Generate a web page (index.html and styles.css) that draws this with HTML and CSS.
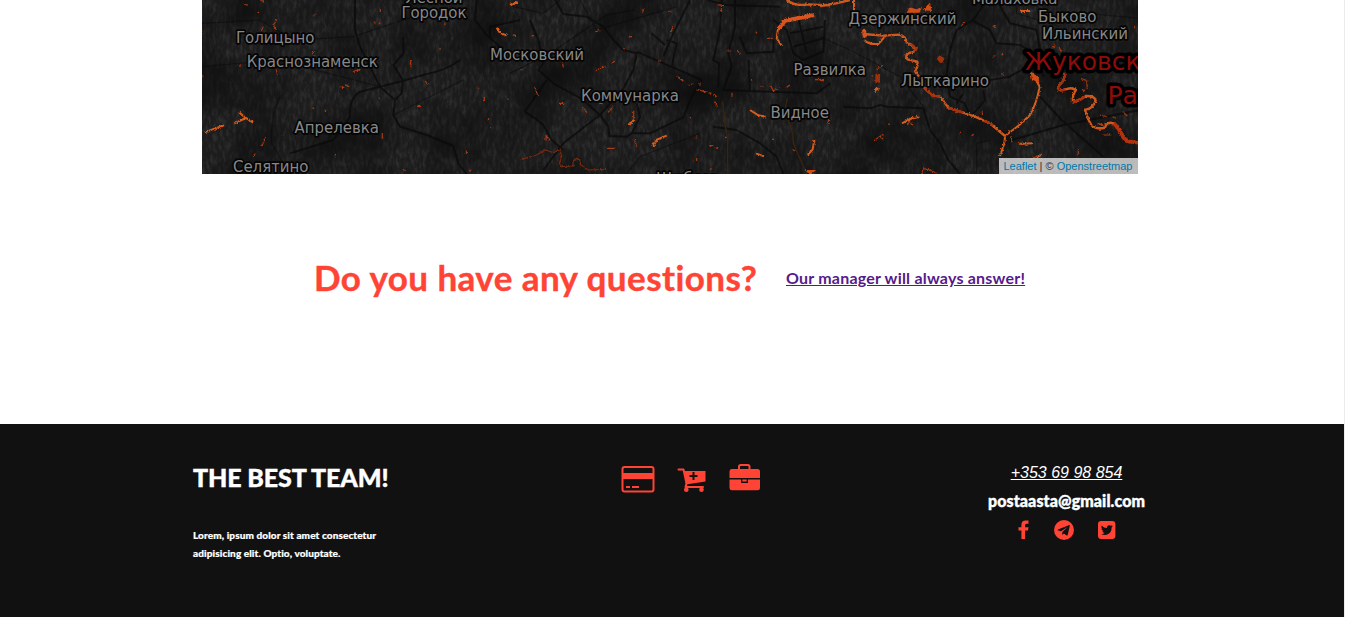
FILE: index.html
```html
<!DOCTYPE html>
<html lang="en">
<head>
<meta charset="utf-8">
<title>The best team</title>
<link rel="stylesheet" href="styles.css">
</head>
<body>
<div class="page">
<section class="map">
<svg class="map-canvas" width="936" height="174" viewBox="202 0 936 174" aria-hidden="true">
  <defs>
    <filter id="grain" x="0" y="0" width="100%" height="100%" color-interpolation-filters="sRGB">
      <feTurbulence type="fractalNoise" baseFrequency="0.3 0.12" numOctaves="3" seed="8"/>
      <feColorMatrix values="0 0 0 0 .3  0 0 0 0 .3  0 0 0 0 .3  1.7 0 0 0 -.68"/>
    </filter>
    <filter id="patch" x="0" y="0" width="100%" height="100%" color-interpolation-filters="sRGB">
      <feTurbulence type="fractalNoise" baseFrequency="0.018" numOctaves="3" seed="3"/>
      <feColorMatrix values="0 0 0 0 .06  0 0 0 0 .06  0 0 0 0 .06  2.2 0 0 0 -.85"/>
    </filter>
    <filter id="rough" x="-5%" y="-5%" width="110%" height="110%">
      <feTurbulence type="fractalNoise" baseFrequency="0.2" numOctaves="2" seed="5"/>
      <feDisplacementMap in="SourceGraphic" scale="9" xChannelSelector="R" yChannelSelector="G"/>
    </filter>
  </defs>
  <rect x="202" width="936" height="174" fill="#1c1c1c"/>
  <rect x="202" width="936" height="174" filter="url(#grain)" opacity=".55"/>
  <rect x="202" width="936" height="174" filter="url(#patch)"/>

  <g transform="translate(200 0) scale(.33333)">
    <g class="road">
      <path d="M465 0V90L480 140L510 200L540 260L585 300L580 345L600 380L680 405L760 438L775 490L800 522"/>
      <path d="M780 180Q740 210 680 222L600 245L540 260L480 275Q445 300 450 350L400 420L270 460"/>
      <path d="M610 110V160L580 195L608 240L605 280L585 300"/>
      <path d="M830 0L825 60L860 105L900 140M870 110V80L960 60"/>
      <path class="thin" d="M6 70L180 60L280 120L460 110L640 50M6 200L230 180L540 260M240 290Q210 350 215 430L270 522M580 345L790 240"/>
    </g>
    <g class="water">
      <path class="thick" d="M14 397L45 385L72 376M103 370L138 354L160 368M137 354L117 337"/>
      <path d="M130 13L144 16M185 0L192 8M338 49L348 40M230 58L221 78L229 90M184 92L190 80M541 24V36M520 66L526 69M536 73L541 67M734 76L736 68M228 208L233 224M120 192V201M336 162L344 154M338 168H346M458 215L481 208M418 262H430M436 254L448 260M676 243L683 254M853 291V305M832 265H836M865 354V362M872 382V386M799 450V462M632 180V200M720 143V149M757 113V118M651 319H663M547 400V414M544 414H550M376 328V335M336 322L342 326M197 412L191 425L186 438M160 468L166 461M404 467H408M609 508L614 512M808 516L813 509M250 405V408M172 35L177 38M6 95L8 100M5 228H10M924 295V300M538 292V296"/>
      <path class="thick" d="M890 83L900 99L920 106M932 15L951 8"/>
    </g>
  </g>

  <g transform="translate(510 0) scale(.33333)">
    <g class="road">
      <path d="M135 0L160 42L230 50L280 80L310 120L340 150L380 160L370 210L340 265L270 345L160 430L100 510"/>
      <path d="M540 0L490 100L460 170M270 345L295 380L298 408L350 410L365 400L420 400L520 352L545 290L575 240L380 155"/>
      <path d="M635 0L630 90L610 180L627 190L625 260M675 0V80L655 160L665 200L640 270L920 280L960 250"/>
      <path d="M690 110L710 160L790 155L790 120M715 180L720 270M590 0L650 15L810 20M610 380L680 390L750 430L800 470L820 522"/>
      <path d="M60 60L85 120L100 190L85 210L130 250L220 300L270 345M110 240L45 335L75 355L100 375L125 420L160 450M380 310L390 350L365 400M470 120L500 130L485 200M425 100L465 135M790 60L830 90L850 160L880 180L940 155L945 60M840 100L940 80M865 55L890 160M850 140L940 115"/>
      <path class="thin" d="M0 220L120 160L290 45L370 30M10 20L100 40L150 0M210 0L260 90L500 20M350 522L390 470L570 400M880 360L960 340"/>
    </g>
    <g class="amber">
      <path d="M638 305L645 370L653 420V522M832 295L822 340Q850 380 850 430L890 522"/>
    </g>
    <g class="water">
      <path class="wide" d="M830 0Q855 20 895 13L960 16"/>
      <path class="bank" d="M912 45L870 53L825 62L805 88"/>
      <path class="thick" d="M804 85L800 115L815 137M720 330L745 346L767 350M738 460L762 469M913 420L908 448L893 465M0 15L23 6M371 360L357 376M432 441L428 428M430 438L441 419L470 407"/>
      <path d="M400 26L398 38M478 33L484 36M256 95L268 92M354 110H368M67 104V110M10 104L18 107M158 190L160 202M258 212L272 203L287 201M305 189L315 184M30 210H40M74 260L84 288M147 310H163M217 321L231 338M268 311H278M293 338L310 320M371 330V360M373 420L380 440M288 445H314M108 422V408L120 420M340 146H344M444 183H449M483 95L489 82M500 228L522 245M536 256L550 250M560 268L604 280M611 282L620 290M615 305L622 320M650 153H662M680 150L690 160M736 93L741 100M771 115H788M634 18V36M625 14L642 17M666 278V290M720 235L728 243M755 258L760 262M783 258L790 273L806 266M830 262L840 255M915 239H942M540 350L543 356M570 250V257M598 437H610M558 410L562 416M616 444L624 445M786 418H792M560 475V483M600 510L606 503M848 448L854 453M645 412H650"/>
      <path class="fill" d="M884 510H918L905 522H898Z"/>
      <path class="dim" d="M35 478L80 465L105 450L130 458L150 450L155 468L148 490L155 500L190 498Q185 480 200 475Q215 480 210 493L235 510L288 508"/>
    </g>
  </g>

  <g transform="translate(820 0) scale(.33333)">
    <g class="road">
      <path d="M500 0L460 60L410 90L390 150L380 220L390 290L435 310L450 350L480 320L495 300L490 270M430 280L410 310M455 60L510 90L530 130L600 135L650 165L670 230M510 240L570 230L620 200"/>
      <path d="M70 320L150 325L180 315L200 320L310 325L330 390L360 430L385 480L420 522M570 422L730 375L960 330M660 290L725 360L850 470M530 0L570 70L650 90L660 150"/>
      <path class="thin" d="M0 110L90 150L240 230L310 320M510 420L470 430V522M730 70L800 40L960 55M170 0L210 60M590 0V40L720 80"/>
    </g>
    <g class="water">
      <path class="bank" d="M132 87L134 112"/>
      <path class="wide" d="M0 18L48 10L90 0M130 102L190 107L238 104Q258 110 260 127L288 145Q285 157 270 158Q252 165 262 178L292 185Q295 200 285 214L297 230M312 262L335 285L360 290L385 323L465 350L510 370L555 408"/>
      <path class="deep" d="M270 130L290 145L284 155M314 264L335 285L360 290M385 323L430 338M490 360L520 376"/>
      <path class="thick" d="M133 120Q145 134 175 132L196 108M102 0V30M555 408L598 375L630 345Q650 310 659 260L648 240L636 220M555 410L553 430L540 468"/>
      <path class="fill" d="M260 38L268 22L290 28L306 20L300 38ZM308 30L330 8L335 33ZM632 214L656 233L658 248L635 238Z"/>
      <path class="fill dark" d="M350 180L357 166L374 175L366 190ZM166 222H180V248H166Z"/>
      <path class="wide" d="M732 218Q738 240 718 255Q705 277 735 269Q755 260 768 270Q756 285 759 307Q782 300 796 288Q825 287 827 302Q820 325 795 330Q802 357 815 377Q832 390 855 383Q860 363 882 370"/>
      <path class="deep" d="M732 218Q738 240 718 255Q705 277 735 269M759 307Q782 300 796 288"/>
      <path class="bank red" d="M882 370Q904 395 910 413L925 424L960 429"/>
      <path class="thick" d="M246 370L270 357L298 350M597 432L637 430M165 275L170 265L177 270M602 33H631M650 472L665 463"/>
      <path d="M170 208L190 195M154 228H160M424 78L434 66M0 242H12M26 360L23 372M164 420L190 403M180 410L190 418M262 375L270 363L275 376M204 372L210 373M519 77L527 83M520 168H527M544 165L550 163M543 222H552M487 334V345M573 408L576 427M599 434V426M694 146L706 136M718 142L723 155M713 190L718 205M782 236L800 241L802 268M796 271H788M843 372L851 380M833 370L855 375M840 345L860 350M850 405H872L868 401M878 350L888 355M908 335L922 348M775 450V463M305 522L310 506L330 510L350 520M418 400L424 396M944 80V85M455 408L461 402M630 478L650 470"/>
    </g>
  </g>

  <g class="towns">
    <text x="405.500" y="3" textLength="57">Лесной</text>
    <text x="401.500" y="18" textLength="65">Городок</text>
    <text x="236" y="43.300" textLength="78.500">Голицыно</text>
    <text x="246.700" y="66.500" textLength="131">Краснознаменск</text>
    <text x="294.500" y="133" textLength="84.500">Апрелевка</text>
    <text x="233" y="171.700" textLength="75.500">Селятино</text>
    <text x="490" y="59.500" textLength="94">Московский</text>
    <text x="581" y="101" textLength="98">Коммунарка</text>
    <text x="656" y="184" textLength="64">Щербинка</text>
    <text x="770.500" y="118" textLength="58.500">Видное</text>
    <text x="793.500" y="75" textLength="72.500">Развилка</text>
    <text x="848.500" y="24" textLength="108">Дзержинский</text>
    <text x="901" y="85.500" textLength="88">Лыткарино</text>
    <text x="972" y="3.700" textLength="85.500">Малаховка</text>
    <text x="1038" y="22" textLength="58.500">Быково</text>
    <text x="1042" y="39" textLength="86">Ильинский</text>
  </g>
  <g class="cities">
    <text x="1025" y="70">Жуковский</text>
    <text x="1107.500" y="103.500">Раменское</text>
  </g>
</svg>
<div class="attribution"><span class="credit">Leaflet</span> | © <span class="credit">Openstreetmap</span></div>
</section>

<section class="questions">
  <h2 class="questions-title">Do you have any questions?</h2>
  <a class="questions-link" href="#">Our manager will always answer!</a>
</section>

<footer class="footer">
  <div class="about">
    <h3 class="team">THE BEST TEAM!</h3>
    <p class="lorem">Lorem, ipsum dolor sit amet consectetur<br>adipisicing elit. Optio, voluptate.</p>
  </div>
  <div class="services">
    <svg class="card" width="34" height="28" viewBox="0 0 34 28"><rect x="1.500" y="1" width="31" height="24.500" rx="2" fill="none" stroke="#ff4335" stroke-width="2"/><path fill="#ff4335" d="M1 7H33V13H1ZM5 20H9V22H5ZM11 20H18V22H11Z"/></svg>
    <svg class="cart" width="30" height="28" viewBox="0 0 30 28"><path fill="none" stroke="#ff4335" stroke-width="2" stroke-linecap="round" stroke-linejoin="round" d="M1.500 2.500H6.500L9.500 16.500L8.500 20H26"/><path fill="#ff4335" fill-rule="evenodd" d="M7 4H28.500V14.500L9 17.500ZM15.500 5V8H12.500V10H15.500V13H17.500V10H20.500V8H17.500V5Z"/><circle cx="9.300" cy="22.800" r="2.300" fill="#ff4335"/><circle cx="24.500" cy="22.800" r="2.300" fill="#ff4335"/></svg>
    <svg class="case" width="31" height="28" viewBox="0 0 31 28"><path fill="none" stroke="#ff4335" stroke-width="2" d="M10 6V2.800Q10 1 11.700 1H18.800Q20.500 1 20.500 2.800V6"/><path fill="#ff4335" d="M2.500 5H28.500Q31 5 31 7.500V14H0.500V7.500Q.5 5 2.500 5ZM.5 15.500H12V19H19V15.500H31V24Q31 26.300 28.500 26.300H3Q.5 26.300 .5 24ZM13.300 15.500H17.700V17.500H13.300Z"/></svg>
  </div>
  <div class="contacts">
    <a class="phone" href="#">+353 69 98 854</a>
    <span class="mail">postaasta@gmail.com</span>
    <div class="social">
      <svg width="12" height="20" viewBox="0 0 12 20" fill="#ff4335"><path d="M10.500 .6V3.700H8.500Q7 3.700 7 5.200V7.200H10.500L10 10.400H7V19H3.400V10.400H.5V7.200H3.400V4.700Q3.400 .4 7.700 .4Q9.600 .4 10.500 .6Z"/></svg>
      <svg width="20" height="20" viewBox="0 0 20 20"><circle cx="10" cy="10" r="10" fill="#ff4335"/><path fill="#111" d="M15.400 5L4 9.600Q3.300 10 4.200 10.400L7 11.300L13.700 7L8.400 12L8.200 15L9.900 13.400L12.700 15.500Q13.400 15.900 13.700 15L15.800 5.700Q15.900 4.800 15.400 5Z"/></svg>
      <svg width="18" height="18" viewBox="0 0 18 18"><rect width="17.400" height="18" rx="3.300" fill="#ff4335"/><path fill="#111" d="M14.800 5.100Q14.200 5.400 13.500 5.500Q14.200 5.100 14.500 4.200L12.900 4.800Q11.700 3.700 10.200 4.400Q8.600 5.200 9 7.100Q5.700 6.900 3.700 4.400Q2.600 6.500 4.500 7.900L3.400 7.600Q3.400 9.500 5.500 10.100L4.400 10.200Q4.900 11.800 6.700 11.900Q5.300 13.100 3.200 12.900Q6.700 15 10.200 13.100Q13.700 11 13.600 6.400Q14.400 5.800 14.800 5.100Z"/></svg>
    </div>
  </div>
</footer>
</div>
</body>
</html>
```
FILE: styles.css
```css
* { box-sizing: border-box; }
body { margin: 0; background: #fff; font-family: Lato, "Liberation Sans", sans-serif; font-variant-ligatures: none; }
.page { height: 617px; border-right: 1px solid #ececec; overflow: hidden; }
.map { position: relative; width: 936px; height: 174px; margin-left: 202px; overflow: hidden; }
.map-canvas { display: block; }
.road { fill: none; stroke: #090909; stroke-width: 6; stroke-linejoin: round; opacity: .7; }
.road .thin { stroke-width: 4; opacity: .65; }
.amber { fill: none; stroke: #38240f; stroke-width: 4; }
.water { fill: none; stroke: #a83a12; stroke-width: 3.5; filter: url(#rough); }
.water .dim { stroke: #75290d; }
.water .thick { stroke: #d85c1c; stroke-width: 6; }
.water .wide { stroke: #cf591e; stroke-width: 7; stroke-linejoin: round; }
.water .deep { stroke: #a83010; stroke-width: 7; stroke-linejoin: round; }
.water .bank { stroke: #dd521c; stroke-width: 12; stroke-linejoin: round; }
.water .red { stroke: #b43210; stroke-width: 11; }
.water .fill { fill: #d44c16; stroke: none; }
.water .dark { fill: #98320f; }
.towns { font: 15px "DejaVu Sans", sans-serif; fill: #888; stroke: #050505; stroke-width: 3.5px; stroke-linejoin: round; paint-order: stroke; }
.cities { font: 25px "DejaVu Sans", sans-serif; fill: #8e0c0c; stroke: #000; stroke-width: 7px; stroke-linejoin: round; paint-order: stroke; }
.attribution { position: absolute; right: 0; bottom: 0; height: 16px; padding: 0 5.500px 0 4.500px; background: rgba(255,255,255,.7); color: #333; font: 11px/16px "Liberation Sans", Arial, sans-serif; white-space: nowrap; }
.credit { color: #0078a8; }
.questions { height: 250px; padding: 76px 0 0 314px; display: flex; align-items: flex-start; gap: 30px; }
.questions-title { margin: -1px 0 0; width: 442px; color: #ff4335; font-size: 35px; letter-spacing: .43px; -webkit-text-stroke: .4px #ff4335; font-weight: 700; line-height: 56px; white-space: nowrap; }
.questions-link { color: #551a8b; font-size: 16px; letter-spacing: .21px; font-weight: 700; line-height: 56px; white-space: nowrap; }
.footer { height: 193px; background: #111; color: #fff; display: grid; grid-template-columns: 428px 366px 159px; padding-left: 193px; }
.team { margin: 38px 0 0; font-size: 25px; line-height: 30px; letter-spacing: -.1px; font-weight: 900; -webkit-text-stroke: .4px #fff; white-space: nowrap; }
.lorem { margin: 34px 0 0; font-size: 10px; line-height: 18px; letter-spacing: .1px; font-weight: 900; -webkit-text-stroke: .2px #fff; white-space: nowrap; }
.services { display: flex; align-items: flex-start; padding-top: 40px; }
.card { margin-top: 2px; }
.cart { margin: 3px 0 0 22px; }
.case { margin-left: 22px; }
.contacts { display: flex; flex-direction: column; align-items: center; padding-top: 39px; }
.phone { color: #fff; font: italic 16px/20px "Liberation Sans", Arial, sans-serif; }
.mail { margin-top: 8px; font-size: 16px; line-height: 20px; letter-spacing: .1px; font-weight: 900; -webkit-text-stroke: .4px #fff; white-space: nowrap; }
.social { display: flex; align-items: center; gap: 24px; margin-top: 9px; }
```
